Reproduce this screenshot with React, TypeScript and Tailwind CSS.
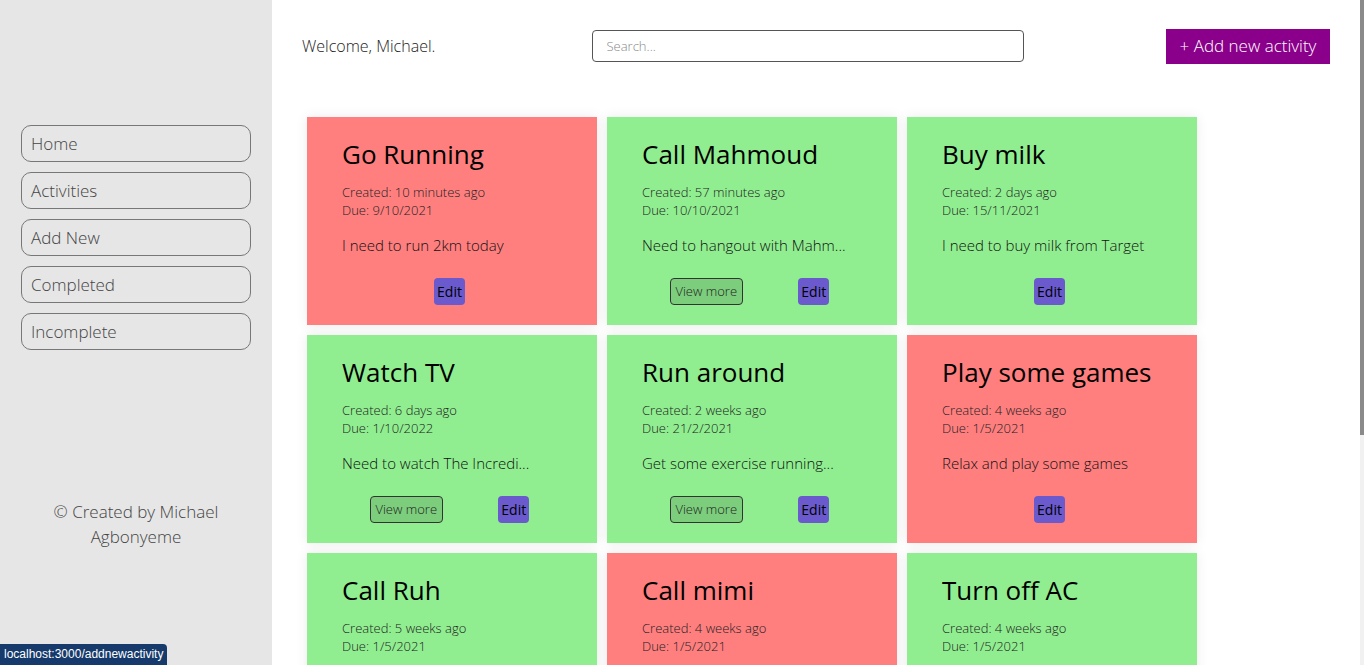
type Activity = {
  title: string;
  created: string;
  due: string;
  description: string;
  done: boolean;
  viewMore?: boolean;
};

const activities: Activity[] = [
  { title: "Go Running", created: "10 minutes ago", due: "9/10/2021", description: "I need to run 2km today", done: false },
  { title: "Call Mahmoud", created: "57 minutes ago", due: "10/10/2021", description: "Need to hangout with Mahm...", done: true, viewMore: true },
  { title: "Buy milk", created: "2 days ago", due: "15/11/2021", description: "I need to buy milk from Target", done: true },
  { title: "Watch TV", created: "6 days ago", due: "1/10/2022", description: "Need to watch The Incredi...", done: true, viewMore: true },
  { title: "Run around", created: "2 weeks ago", due: "21/2/2021", description: "Get some exercise running...", done: true, viewMore: true },
  { title: "Play some games", created: "4 weeks ago", due: "1/5/2021", description: "Relax and play some games", done: false },
  { title: "Call Ruh", created: "5 weeks ago", due: "1/5/2021", description: "Call Ruh about the project", done: true },
  { title: "Call mimi", created: "4 weeks ago", due: "1/5/2021", description: "Call mimi tonight", done: false },
  { title: "Turn off AC", created: "4 weeks ago", due: "1/5/2021", description: "Turn off the AC at home", done: true },
];

const navItems = ["Home", "Activities", "Add New", "Completed", "Incomplete"];

function ActivityCard({ activity }: { activity: Activity }) {
  return (
    <div
      className={
        "flex h-[208px] flex-col pt-[18px] pl-[35px] pr-[40px] pb-[20px] text-black shadow-[0_0_12px_rgba(0,0,0,0.08)] " +
        (activity.done ? "bg-[#90ee90]" : "bg-[#ff7f7f]")
      }
    >
      <h2 className="text-[26px] leading-[39px] whitespace-nowrap">{activity.title}</h2>
      <p className="mt-[9px] text-[13px] leading-[18px] font-light text-[#222]">
        Created: {activity.created}
      </p>
      <p className="text-[13px] leading-[18px] font-light text-[#222]">Due: {activity.due}</p>
      <p className="mt-[15px] text-[15px] leading-[22px] font-light whitespace-nowrap text-[#111]">
        {activity.description}
      </p>
      <div className="mt-auto flex justify-around">
        {activity.viewMore && (
          <button className="h-[27px] w-[73px] rounded-[4px] border border-[#333] bg-[#7ccd7c] text-[13px] font-light text-[#222]">
            View more
          </button>
        )}
        <button className="h-[27px] w-[31px] rounded-[4px] bg-[#6a5acd] text-[14px] text-black">
          Edit
        </button>
      </div>
    </div>
  );
}

export default function App() {
  return (
    <div className="flex h-screen overflow-hidden bg-white font-['Open_Sans',sans-serif]">
      <aside className="flex h-full w-[272px] shrink-0 flex-col bg-[#e6e6e6] px-[21px] pt-[125px]">
        <nav className="flex flex-col gap-[10px]">
          {navItems.map((item) => (
            <a
              key={item}
              className="flex h-[37px] items-center rounded-[10px] border border-[#777] pl-[9px] text-[17px] font-light text-[#444]"
            >
              {item}
            </a>
          ))}
        </nav>
        <p className="mt-[149px] text-center text-[17px] leading-[25px] font-light text-[#444]">
          © Created by Michael
          <br />
          Agbonyeme
        </p>
      </aside>

      <main className="flex-1 pr-[34px]">
        <header className="flex h-[92px] items-center justify-between pl-[30px]">
          <span className="w-[147px] text-[16px] font-light whitespace-nowrap text-[#222]">
            Welcome, Michael.
          </span>
          <input
            className="h-[32px] w-[432px] rounded-[4px] border border-[#555] px-[14px] text-[13px] font-light outline-none placeholder:text-[#888]"
            placeholder="Search..."
          />
          <button className="h-[35px] w-[164px] bg-[#8b008b] text-[17px] font-light text-white">
            + Add new activity
          </button>
        </header>
        <section className="mt-[25px] ml-[35px] grid w-[890px] grid-cols-3 gap-[10px]">
          {activities.map((activity) => (
            <ActivityCard key={activity.title} activity={activity} />
          ))}
        </section>
      </main>

      <div className="fixed top-0 right-0 flex h-full w-[4px] flex-col">
        <div className="h-[435px] bg-[#8a8a8a]" />
        <div className="flex-1 bg-[#f1f1f1]" />
      </div>

      <div className="fixed bottom-0 left-0 rounded-tr-[4px] bg-[#163a6b] px-[4px] py-[2px] font-['Liberation_Sans',sans-serif] text-[12px] leading-[17px] text-white">
        localhost:3000/addnewactivity
      </div>
    </div>
  );
}
